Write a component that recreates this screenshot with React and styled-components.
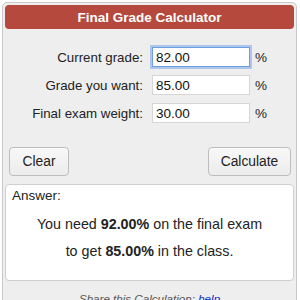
import React from "react";
import styled, { createGlobalStyle } from "styled-components";

const Global = createGlobalStyle`
  html, body { margin: 0; padding: 0; background: #ffffff; }
  body { font-family: "Liberation Sans", Arial, Helvetica, sans-serif; color: #222; }
`;

const Panel = styled.div`
  box-sizing: border-box;
  margin: 2px 0 0 2px;
  width: 295px;
  border: 1px solid #c9c9c9;
  border-radius: 5px;
  background: #eeeeee;
  padding: 2px 2px 0 2px;
`;

const Header = styled.div`
  height: 24px;
  border-radius: 4px;
  background: #b5493d;
  color: #ffffff;
  font-weight: bold;
  font-size: 13.5px;
  display: flex;
  align-items: center;
  justify-content: center;
`;

const Form = styled.div`
  display: flex;
  flex-direction: column;
  gap: 8px;
  padding-top: 18px;
`;

const Row = styled.div`
  display: flex;
  align-items: center;
  height: 20px;
`;

const Label = styled.label`
  width: 138px;
  text-align: right;
  font-size: 13.3px;
  color: #222;
`;

const Input = styled.div`
  box-sizing: border-box;
  margin-left: 9px;
  width: 98px;
  height: 20px;
  background: #fff;
  border: 1px solid ${(p) => (p.$focus ? "#6d9ee0" : "#d6d6d6")};
  box-shadow: ${(p) => (p.$focus ? "0 0 0 2px rgba(120,165,230,0.55)" : "none")};
  font-size: 13.5px;
  padding-left: 3px;
  display: flex;
  align-items: center;
  color: #111;
`;

const Unit = styled.span`
  margin-left: 5px;
  font-size: 13.5px;
`;

const Buttons = styled.div`
  display: flex;
  justify-content: space-between;
  padding: 0 3px 0 4px;
  margin-top: 24px;
`;

const Button = styled.button`
  box-sizing: border-box;
  height: 29px;
  width: ${(p) => p.$w}px;
  border: 1px solid #bdbdbd;
  border-radius: 4px;
  background: linear-gradient(#f8f8f8, #ececec);
  font-family: inherit;
  font-size: 13.8px;
  color: #222;
  padding: 0;
`;

const Answer = styled.div`
  box-sizing: border-box;
  margin-top: 8px;
  height: 97px;
  background: #ffffff;
  border: 1px solid #cfcfcf;
  border-radius: 4px;
  padding: 2px 6px;
  font-size: 14.3px;
`;

const AnswerTitle = styled.div`
  font-size: 13.5px;
  line-height: 18px;
`;

const Lines = styled.div`
  padding-top: 6px;
`;

const AnswerLine = styled.div`
  text-align: center;
  line-height: 27px;
`;

const Share = styled.div`
  text-align: center;
  font-style: italic;
  color: #555;
  font-size: 11.6px;
  padding-top: 11px;
  height: 20px;
  a { color: #0b27d6; text-decoration: underline; }
`;

export default function App() {
  return (
    <>
      <Global />
      <Panel>
        <Header>Final Grade Calculator</Header>
        <Form>
          <Row>
            <Label>Current grade:</Label>
            <Input $focus>82.00</Input>
            <Unit>%</Unit>
          </Row>
          <Row>
            <Label>Grade you want:</Label>
            <Input>85.00</Input>
            <Unit>%</Unit>
          </Row>
          <Row>
            <Label>Final exam weight:</Label>
            <Input>30.00</Input>
            <Unit>%</Unit>
          </Row>
        </Form>
        <Buttons>
          <Button $w={60}>Clear</Button>
          <Button $w={83}>Calculate</Button>
        </Buttons>
        <Answer>
          <AnswerTitle>Answer:</AnswerTitle>
          <Lines>
            <AnswerLine>
              You need <b>92.00%</b> on the final exam
            </AnswerLine>
            <AnswerLine>
              to get <b>85.00%</b> in the class.
            </AnswerLine>
          </Lines>
        </Answer>
        <Share>
          Share this Calculation: <a href="#">help</a>
        </Share>
      </Panel>
    </>
  );
}
